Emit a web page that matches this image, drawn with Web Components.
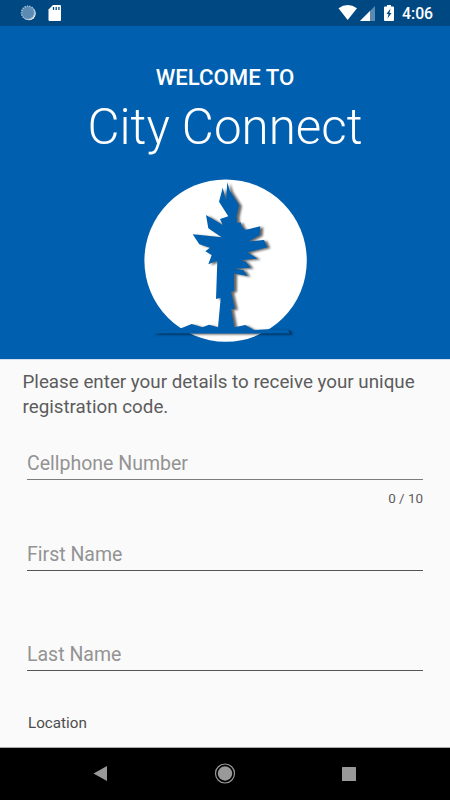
<!DOCTYPE html>
<html lang="en">
<head>
<meta charset="utf-8">
<title>City Connect</title>
<style>
    body {
        margin: 0;
        background: #fafafa;
        font-family: Roboto, "Liberation Sans", sans-serif;
    }
</style>
</head>
<body>
<register-screen></register-screen>

<script>
customElements.define('status-bar', class extends HTMLElement {
    constructor() {
        super();
        this.attachShadow({mode: "open"}).innerHTML = `
            <style>
                :host {
                    display: flex;
                    justify-content: space-between;
                    height: 26px;
                    background: #004882;
                    color: #fff;
                }
                svg { display: block; }
                .right { display: flex; }
                .time {
                    width: 48px;
                    font-size: 15.800px;
                    font-weight: 500;
                    line-height: 28px;
                }
            </style>
            <svg width="80" height="26">
                <circle cx="29" cy="13.6" r="6.7" fill="#fff"/>
                <circle cx="28" cy="12.7" r="6.8" fill="#5c8ab3"/>
                <circle cx="28" cy="12.7" r="6.5" fill="none" stroke="#a4bfd5" stroke-width="1.6" stroke-dasharray="1.2 1.2"/>
                <path d="M53 5h7q1 0 1 1v14q0 1-1 1H49.500q-1 0-1-1V9.500z" fill="#fff"/>
                <path d="M53.500 7v3M56.200 7v3M58.900 7v3" stroke="#004882" stroke-width="1.300"/>
            </svg>
            <div class="right">
                <svg width="64" height="26">
                    <path d="M0.500 8.300Q9.700 1.500 19 8.300L9.700 20z" fill="#fff"/>
                    <path d="M22 21L37 6v15z" fill="#5c8ab3"/>
                    <path d="M22 21L32 11v10z" fill="#fff"/>
                    <path d="M49 5h4v1.500h2q1 0 1 1V20q0 1-1 1h-8q-1 0-1-1V7.500q0-1 1-1h2z" fill="#fff"/>
                    <path d="M52.500 8.500l-4 5.500h2l-1 4.500 4-5.500h-2z" fill="#004882"/>
                </svg>
                <span class="time"><slot></slot></span>
            </div>
        `;
    }
});

customElements.define('city-logo', class extends HTMLElement {
    constructor() {
        super();
        this.attachShadow({mode: "open"}).innerHTML = `
            <style>
                :host { display: block; }
                svg { display: block; margin: 0 auto; }
                .tree { filter: drop-shadow(3px 1.500px .8px rgba(0, 0, 0, .6)); }
            </style>
            <svg width="150" height="166" viewBox="150 178 150 166" overflow="visible">
                <circle cx="225.600" cy="260.600" r="81.200" fill="#fff"/>
                <path class="tree" fill="#005fae" d="M227.300 182.300L230 191L239 205L236.500 216.500L237 223L240.700 222.300
                    L241.500 226L245.300 230L260.300 226.300L259.700 235L248.500 241.500L264 240L267.300 247.300
                    L247.300 252.300L257.700 258.700L241.700 260L246 262L250.700 267.700L233.700 268.700L243.300 270
                    L247.700 276L234 273.500V291L231 291.700L235 309.300L231 308.700L234.300 327.300L245.300 325
                    L254 330L268 329.300L287.700 330L290 333.500H151L158 331L181 328.300L191.700 324L202.300 327.300
                    L209 324.700L218 327.300L220.700 297.700L216 299L217.300 260.700L208.300 264.300L211.700 255
                    L205.300 251.300L210 247.700L199.300 244.300L192.700 234.300L221.700 237.300L208.300 228.300
                    L206 215L222.700 225L220 219L228.300 216.300L219 201.700L222.700 187.700L226 200z"/>
            </svg>
        `;
    }
});

customElements.define('welcome-header', class extends HTMLElement {
    constructor() {
        super();
        this.attachShadow({mode: "open"}).innerHTML = `
            <style>
                :host {
                    display: flex;
                    flex-direction: column;
                    align-items: center;
                    box-sizing: border-box;
                    height: 333px;
                    padding-top: 36px;
                    background: #005fae;
                    color: #fff;
                }
                .small { font-size: 22.200px; font-weight: 500; line-height: 30px; }
                h1 { margin: 5px 0 0; font-size: 49.300px; font-weight: 300; line-height: 60px; }
                city-logo { margin-top: 21px; }
            </style>
            <div class="small"><slot name="greeting"></slot></div>
            <h1><slot></slot></h1>
            <city-logo></city-logo>
        `;
    }
});

customElements.define('text-field', class extends HTMLElement {
    constructor() {
        super();
        this.attachShadow({mode: "open"}).innerHTML = `
            <style>
                :host { display: block; height: 100px; }
                .box {
                    height: 31px;
                    border-bottom: 1px solid var(--line, #555);
                    color: #939393;
                    font-size: 19.500px;
                    line-height: 32px;
                }
                .counter {
                    padding-top: 8px;
                    text-align: right;
                    color: #5c5c5c;
                    font-size: 13.400px;
                    line-height: 21px;
                }
            </style>
            <div class="box"><slot></slot></div>
            <div class="counter"><slot name="counter"></slot></div>
        `;
    }
});

customElements.define('nav-bar', class extends HTMLElement {
    constructor() {
        super();
        this.attachShadow({mode: "open"}).innerHTML = `
            <style>
                :host { display: block; height: 52px; background: #000; }
                svg { display: block; }
            </style>
            <svg width="450" height="52" viewBox="0 1 450 52" fill="#999">
                <path d="M93.500 26.500L107 19v15z"/>
                <circle cx="225" cy="26.500" r="7.200"/>
                <circle cx="225" cy="26.500" r="9.500" fill="none" stroke="#999" stroke-width="1.200"/>
                <rect x="342" y="20" width="14" height="14" rx=".5"/>
            </svg>
        `;
    }
});

customElements.define('register-screen', class extends HTMLElement {
    constructor() {
        super();
        this.attachShadow({mode: "open"}).innerHTML = `
            <style>
                :host {
                    display: flex;
                    flex-direction: column;
                    width: 450px;
                    height: 800px;
                    overflow: hidden;
                }
                main {
                    flex: 1;
                    min-height: 0;
                    box-sizing: border-box;
                    border-top: 1px solid #d5dcee;
                    border-bottom: 1px solid #aaa;
                    padding: 10px 27px 0;
                }
                p {
                    margin: 0 -4.500px 29px;
                    color: #5c5c5c;
                    font-size: 18.800px;
                    line-height: 24.500px;
                }
                .phone { --line: #7c7c7c; height: 91px; }
                .location { margin: -26px 1px 0; color: #4c4c4c; font-size: 15.200px; line-height: 20px; }
            </style>
            <status-bar>4:06</status-bar>
            <welcome-header><span slot="greeting">WELCOME TO</span>City Connect</welcome-header>
            <main>
                <p>Please enter your details to receive your unique registration code.</p>
                <text-field class="phone">Cellphone Number<span slot="counter">0 / 10</span></text-field>
                <text-field>First Name</text-field>
                <text-field>Last Name</text-field>
                <div class="location">Location</div>
            </main>
            <nav-bar></nav-bar>
        `;
    }
});
</script>
</body>
</html>
